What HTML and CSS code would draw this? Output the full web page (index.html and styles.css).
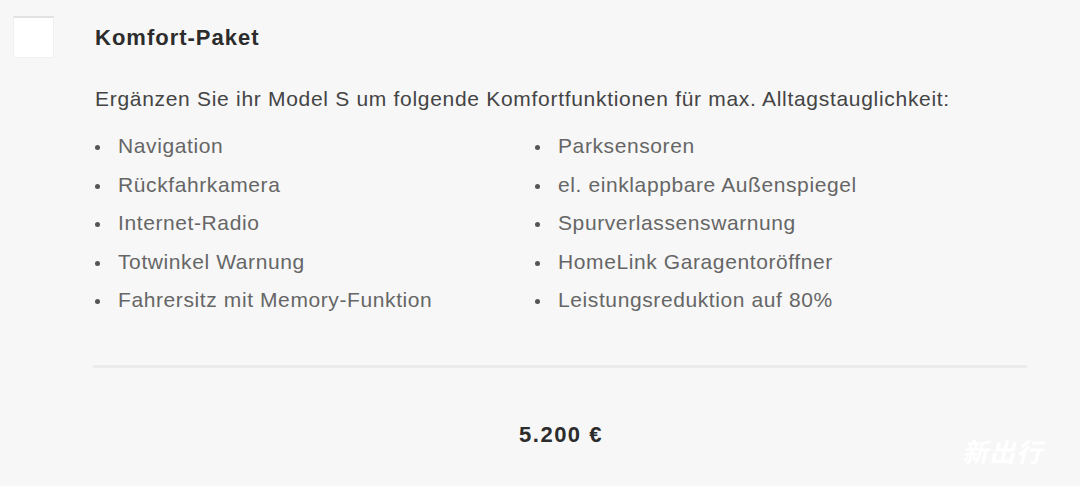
FILE: index.html
```html
<!DOCTYPE html>
<html lang="de">
<head>
<meta charset="utf-8">
<link rel="stylesheet" href="styles.css">
</head>
<body>
<div class="option">
  <div class="check"></div>
  <div class="content">
    <h2 class="title">Komfort-Paket</h2>
    <p class="intro">Ergänzen Sie ihr Model S um folgende Komfortfunktionen für max. Alltagstauglichkeit:</p>
    <div class="lists">
      <ul class="list">
        <li>Navigation</li>
        <li>Rückfahrkamera</li>
        <li>Internet-Radio</li>
        <li>Totwinkel Warnung</li>
        <li>Fahrersitz mit Memory-Funktion</li>
      </ul>
      <ul class="list">
        <li>Parksensoren</li>
        <li>el. einklappbare Außenspiegel</li>
        <li>Spurverlassenswarnung</li>
        <li>HomeLink Garagentoröffner</li>
        <li>Leistungsreduktion auf 80%</li>
      </ul>
    </div>
    <hr class="divider">
    <div class="price">5.200 €</div>
  </div>
</div>
<div class="watermark">新出行</div>
</body>
</html>
```
FILE: styles.css
```css
html, body {
  margin: 0;
  padding: 0;
  background: #f7f7f7;
  width: 1080px;
  height: 486px;
  overflow: hidden;
  font-family: "Liberation Sans", Arial, sans-serif;
}
.option {
  display: flex;
  padding: 16px 53px 0 13px;
  gap: 41px;
}
.check {
  width: 39px;
  height: 39px;
  background: #fff;
  border: 1px solid #f0f0f0;
  border-top: 2px solid #e2e2e2;
  flex: none;
}
.content {
  flex: 1;
}
.title {
  margin: 8px 0 0 0;
  font-size: 22px;
  font-weight: bold;
  color: #2c2c2c;
  line-height: 28px;
  letter-spacing: 1px;
}
.intro {
  margin: 33px 0 0 0;
  font-size: 21px;
  line-height: 28px;
  color: #444;
  letter-spacing: 0.7px;
  white-space: nowrap;
}
.lists {
  display: grid;
  grid-template-columns: 440px 1fr;
  margin-top: 14px;
}
.list {
  list-style: none;
  margin: 0;
  padding: 0;
}
.list li {
  position: relative;
  padding-left: 23px;
  font-size: 21px;
  line-height: 38.6px;
  color: #666;
  letter-spacing: 0.6px;
  white-space: nowrap;
}
.list li::before {
  content: "";
  position: absolute;
  left: 0;
  top: 18px;
  width: 5px;
  height: 5px;
  border-radius: 50%;
  background: #555;
}
.divider {
  margin: 45px 0 0 -2px;
  border: none;
  height: 3px;
  background: #ebebeb;
}
.price {
  margin-top: 54px;
  text-align: center;
  font-size: 22px;
  font-weight: bold;
  color: #2c2c2c;
  letter-spacing: 1.5px;
}
.watermark {
  position: absolute;
  left: 962px;
  top: 432px;
  color: #fff;
  font-family: "Noto Sans CJK SC", sans-serif;
  font-size: 26px;
  font-weight: bold;
  font-style: italic;
  letter-spacing: 1px;
}
```
